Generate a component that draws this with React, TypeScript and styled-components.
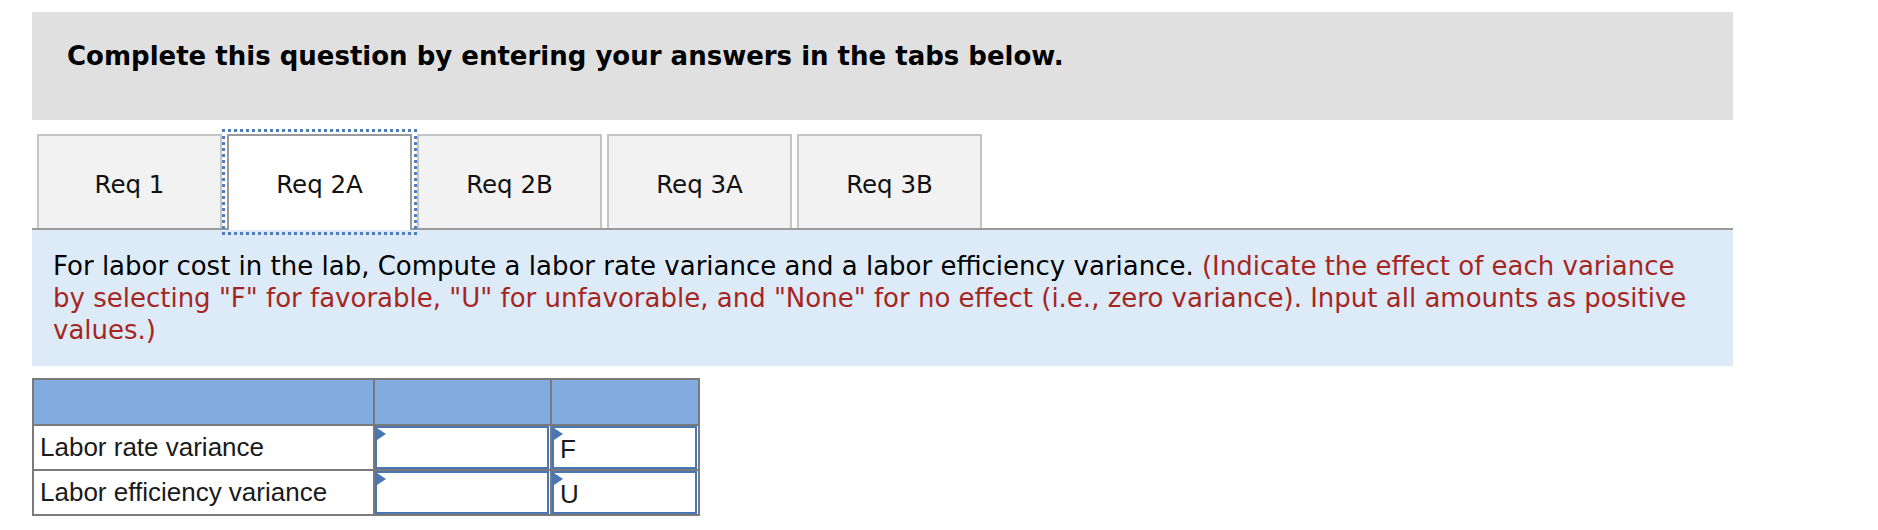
import React from 'react';
import styled, { createGlobalStyle, css } from 'styled-components';

const GlobalStyle = createGlobalStyle`
  body {
    margin: 0;
    background: #ffffff;
    font-family: "DejaVu Sans", Verdana, sans-serif;
  }
`;

const Page = styled.div`
  padding: 12px 0 0 32px;
  width: 1701px;
`;

const Banner = styled.div`
  height: 108px;
  box-sizing: border-box;
  background-color: #e0e0e0;
  padding: 29px 0 0 35px;
  font-size: 26px;
  font-weight: bold;
  line-height: 30px;
  color: #000;
`;

const TabBar = styled.div`
  margin-top: 14px;
  display: flex;
  align-items: flex-end;
  gap: 5px;
  padding-left: 5px;
  border-bottom: 2px solid #9a9a9a;
  height: 94px;
`;

const Tab = styled.div<{ $active?: boolean }>`
  position: relative;
  width: 185px;
  height: 94px;
  box-sizing: border-box;
  display: flex;
  align-items: center;
  justify-content: center;
  font-size: 24.5px;
  color: #111;
  background-color: #f2f2f2;
  border: 2px solid #c4c4c4;
  border-bottom: none;
  padding-top: 4px;

  ${({ $active }) =>
    $active &&
    css`
      background-color: #ffffff;
      border-color: #9a9a9a;
      height: 96px;
      margin-bottom: -2px;
      padding-bottom: 2px;
      outline: 3px dotted #4f7dbf;
      outline-offset: 2px;
      z-index: 1;
    `}
`;

const Panel = styled.div`
  background-color: #ddebf8;
  padding: 20px 25px 20px 21px;
  font-size: 26px;
  line-height: 32px;
  color: #000;
`;

const Note = styled.span`
  color: #a6261f;
`;

const Table = styled.table`
  margin-top: 12px;
  border-collapse: collapse;
  font-family: "Liberation Sans", Arial, sans-serif;
  font-size: 26px;
  color: #1a1a1a;
`;

const HeadCell = styled.th<{ $w: number }>`
  width: ${({ $w }) => $w}px;
  height: 44px;
  background-color: #82abdf;
  border: 2px solid #7a7a7a;
  padding: 0;
`;

const LabelCell = styled.td`
  height: 43px;
  border: 2px solid #7a7a7a;
  padding: 0 0 0 6px;
  vertical-align: middle;
`;

const InputCell = styled.td`
  border: 2px solid #7a7a7a;
  padding: 0 1px 0 0;
  height: 43px;
`;

const InputBox = styled.div`
  position: relative;
  box-sizing: border-box;
  height: 43px;
  border: 2px solid #4a76b6;
  padding-left: 6px;
  display: flex;
  align-items: center;
  padding-top: 3px;

  &::before {
    content: '';
    position: absolute;
    left: 0;
    top: 0;
    border-top: 6px solid transparent;
    border-bottom: 6px solid transparent;
    border-left: 9px solid #4a76b6;
  }
`;

const tabs = ['Req 1', 'Req 2A', 'Req 2B', 'Req 3A', 'Req 3B'];

const rows = [
  { label: 'Labor rate variance', effect: 'F' },
  { label: 'Labor efficiency variance', effect: 'U' },
];

const App = (): React.ReactElement => (
  <>
    <GlobalStyle />
    <Page>
      <Banner>Complete this question by entering your answers in the tabs below.</Banner>
      <TabBar>
        {tabs.map((t) => (
          <Tab key={t} $active={t === 'Req 2A'}>
            {t}
          </Tab>
        ))}
      </TabBar>
      <Panel>
        For labor cost in the lab, Compute a labor rate variance and a labor efficiency variance.{' '}
        <Note>
          (Indicate the effect of each variance by selecting "F" for favorable, "U" for unfavorable,
          and "None" for no effect (i.e., zero variance). Input all amounts as positive values.)
        </Note>
      </Panel>
      <Table>
        <thead>
          <tr>
            <HeadCell $w={339} />
            <HeadCell $w={175} />
            <HeadCell $w={146} />
          </tr>
        </thead>
        <tbody>
          {rows.map((r) => (
            <tr key={r.label}>
              <LabelCell>{r.label}</LabelCell>
              <InputCell>
                <InputBox />
              </InputCell>
              <InputCell>
                <InputBox>{r.effect}</InputBox>
              </InputCell>
            </tr>
          ))}
        </tbody>
      </Table>
    </Page>
  </>
);

export default App;
